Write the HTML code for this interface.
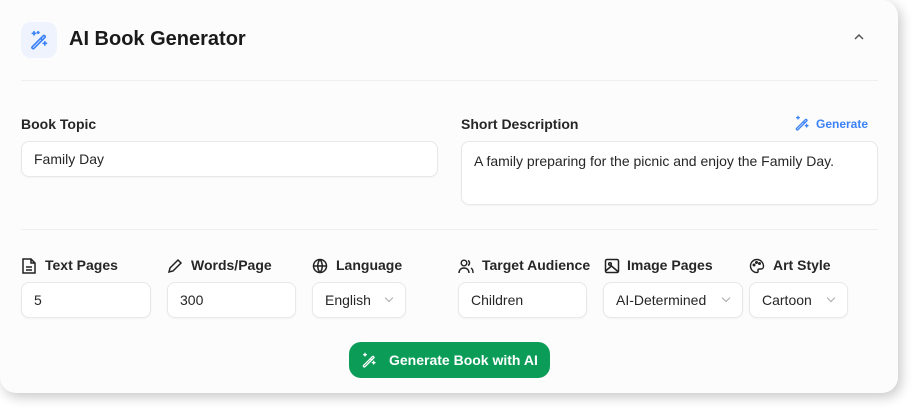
<!DOCTYPE html>
<html><head><style>
*{box-sizing:border-box;margin:0;padding:0}
body{width:919px;height:416px;background:#fff;font-family:"Liberation Sans",sans-serif;position:relative;overflow:hidden;color:#222}
.card{position:absolute;left:0;top:0;width:898px;height:393px;background:#fcfcfc;border-radius:0 16px 16px 16px;box-shadow:3px 4px 12px rgba(0,0,0,.22)}
.a{position:absolute}
.ib{position:absolute;left:21px;top:22px;width:36px;height:36px;border-radius:10px;background:#eef3fd}
.title{left:69px;top:28px;font-size:20px;font-weight:bold;color:#1a1a1a}
.hr{position:absolute;left:21px;width:857px;height:1px;background:#efefef}
.lbl{font-size:14px;font-weight:bold;color:#262626}
.inp{position:absolute;height:36px;background:#fff;border:1px solid #e8e8e8;border-radius:8px;font-size:14px;color:#262626;padding:0 12px;line-height:34px;box-shadow:0 1px 2px rgba(0,0,0,.04)}
.chev{position:absolute;right:13px;top:12px;width:6px;height:6px;border-right:1px solid #aaa;border-bottom:1px solid #aaa;transform:rotate(45deg)}
svg{position:absolute}
.btn{position:absolute;left:349px;top:342px;width:201px;height:36px;border-radius:12px;background:#0b9d58;color:#fff;font-size:14px;font-weight:bold;line-height:36px;padding-left:40px}
</style></head><body>
<div class="card">
<div class="ib"></div>
<svg style="left:29px;top:30px" width="20" height="20" viewBox="0 0 24 24" fill="none" stroke="#3b82f6" stroke-width="2" stroke-linecap="round" stroke-linejoin="round"><path d="M4 20 17 7a1.4 1.4 0 0 1 2 2L6 22a1.4 1.4 0 0 1-2-2z"/><path d="M14 10l2 2"/><path d="M6 2v4M4 4h4M19 14v4M17 16h4M11 2v2M10 3h2"/></svg>
<div class="a title">AI Book Generator</div>
<svg style="left:853px;top:33px" width="12" height="8" viewBox="0 0 12 8" fill="none" stroke="#555" stroke-width="1.5"><path d="M2 6 6 2l4 4"/></svg>
<div class="hr" style="top:80px"></div>
<div class="a lbl" style="left:21px;top:116px">Book Topic</div>
<div class="inp" style="left:21px;top:141px;width:417px">Family Day</div>
<div class="a lbl" style="left:461px;top:116px">Short Description</div>
<svg style="left:794px;top:115px" width="16" height="16" viewBox="0 0 24 24" fill="none" stroke="#3b82f6" stroke-width="2" stroke-linecap="round"><path d="M4 20 17 7a1.4 1.4 0 0 1 2 2L6 22a1.4 1.4 0 0 1-2-2z"/><path d="M14 10l2 2"/><path d="M6 2v4M4 4h4M19 14v4M17 16h4"/></svg>
<div class="a" style="left:816px;top:117px;font-size:12px;font-weight:bold;color:#3b82f6">Generate</div>
<div class="inp" style="left:461px;top:141px;width:417px;height:64px;line-height:20px;padding-top:9px">A family preparing for the picnic and enjoy the Family Day.</div>
<div class="hr" style="top:229px"></div>

<svg style="left:22px;top:258px" width="14" height="16" viewBox="0 0 14 16" fill="none" stroke="#222" stroke-width="1.5"><path d="M1 1h8l4 4v10H1z M9 1v4h4 M4 9h6M4 12h6"/></svg>
<div class="a lbl" style="left:45px;top:257px">Text Pages</div>
<div class="inp" style="left:21px;top:282px;width:130px">5</div>

<svg style="left:167px;top:258px" width="16" height="16" viewBox="0 0 16 16" fill="none" stroke="#222" stroke-width="1.5"><path d="M2 14l1-4 8-8 3 3-8 8z"/></svg>
<div class="a lbl" style="left:191px;top:257px">Words/Page</div>
<div class="inp" style="left:167px;top:282px;width:129px">300</div>

<svg style="left:312px;top:258px" width="16" height="16" viewBox="0 0 16 16" fill="none" stroke="#222" stroke-width="1.5"><circle cx="8" cy="8" r="6.5"/><path d="M1.5 8h13M8 1.5c-3 3.5-3 9.5 0 13M8 1.5c3 3.5 3 9.5 0 13"/></svg>
<div class="a lbl" style="left:336px;top:257px">Language</div>
<div class="inp" style="left:312px;top:282px;width:94px">English<div class="chev"></div></div>

<svg style="left:458px;top:258px" width="16" height="16" viewBox="0 0 16 16" fill="none" stroke="#222" stroke-width="1.4"><circle cx="6" cy="5" r="2.8"/><path d="M1 15c0-3 2-5 5-5s5 2 5 5M10 2.5a2.8 2.8 0 0 1 0 5M13 10c1.5.8 2 2.5 2 5"/></svg>
<div class="a lbl" style="left:482px;top:257px">Target Audience</div>
<div class="inp" style="left:458px;top:282px;width:129px">Children</div>

<svg style="left:604px;top:258px" width="16" height="16" viewBox="0 0 16 16" fill="none" stroke="#222" stroke-width="1.5"><rect x="1.5" y="1.5" width="13" height="13" rx="1.5"/><circle cx="6" cy="6" r="1.3"/><path d="M1.5 13l6-5 7 6"/></svg>
<div class="a lbl" style="left:627px;top:257px">Image Pages</div>
<div class="inp" style="left:603px;top:282px;width:140px">AI-Determined<div class="chev"></div></div>

<svg style="left:749px;top:258px" width="16" height="16" viewBox="0 0 16 16" fill="none" stroke="#222" stroke-width="1.4"><path d="M8 1.5a6.5 6.5 0 0 0 0 13c1 0 1.3-.8 1-1.6-.4-1 .2-1.9 1.3-1.9H12a2.5 2.5 0 0 0 2.5-2.5c0-3.8-2.9-7-6.5-7z"/><circle cx="5" cy="7" r=".8"/><circle cx="7.5" cy="4.5" r=".8"/><circle cx="10.5" cy="5.5" r=".8"/></svg>
<div class="a lbl" style="left:773px;top:257px">Art Style</div>
<div class="inp" style="left:749px;top:282px;width:99px">Cartoon<div class="chev"></div></div>

<div class="btn">Generate Book with AI</div>
<svg style="left:361px;top:352px" width="16" height="16" viewBox="0 0 24 24" fill="none" stroke="#fff" stroke-width="2" stroke-linecap="round"><path d="M4 20 17 7a1.4 1.4 0 0 1 2 2L6 22a1.4 1.4 0 0 1-2-2z"/><path d="M14 10l2 2"/><path d="M6 2v4M4 4h4M19 14v4M17 16h4"/></svg>
</div>
</body></html>
